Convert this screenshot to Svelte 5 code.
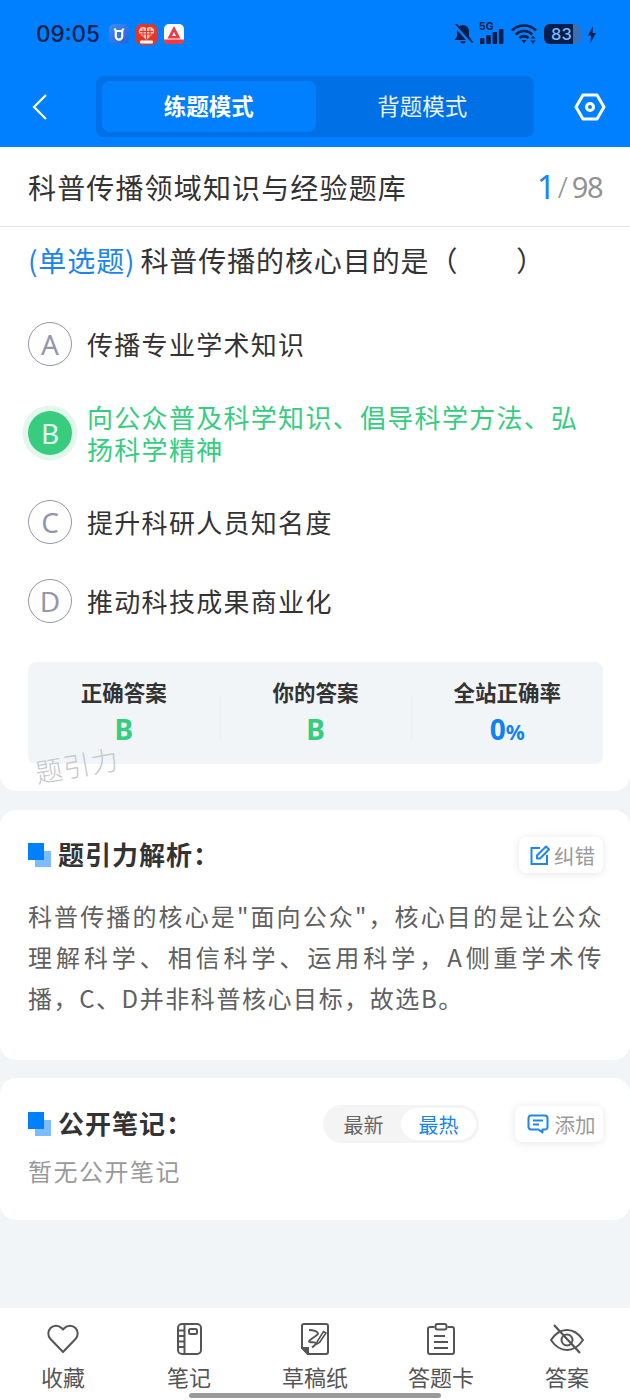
<script>
  const options = [
    { key: 'A', text: '传播专业学术知识' },
    { key: 'B', text: '向公众普及科学知识、倡导科学方法、弘扬科学精神', correct: true },
    { key: 'C', text: '提升科研人员知名度' },
    { key: 'D', text: '推动科技成果商业化' }
  ];
</script>

<div class="page">
  <header class="header">
    <div class="status">
      <span class="time">09:05</span>
      <div class="apps">
        <svg width="20" height="20" viewBox="0 0 20 20"><defs><linearGradient id="g1" x1="0" y1="0" x2="1" y2="1"><stop offset="0" stop-color="#3d8cf5"/><stop offset="1" stop-color="#2560dc"/></linearGradient></defs><rect width="20" height="20" rx="5" fill="url(#g1)"/><path d="M5.500 4.500 7 7M14.500 4.500 13 7M6.800 7h6.400v5.500a3.200 3.200 0 0 1-6.400 0z" fill="none" stroke="#fff" stroke-width="2.200"/></svg>
        <svg width="21" height="21" viewBox="0 0 21 21"><rect width="21" height="21" rx="5" fill="#e2362a"/><path d="M10.500 16 3.500 9.500A3.900 3.900 0 0 1 10.500 4.800a3.900 3.900 0 0 1 7 4.700z" fill="#f9c8b8"/><path d="M4 7.500h13M4 10h13M7 4.500v9M10.500 4.500v11M14 4.500v9" stroke="#e2362a" stroke-width="1"/><rect x="4" y="16.500" width="13" height="3" rx="1" fill="#fff"/></svg>
        <svg width="20" height="20" viewBox="0 0 20 20"><rect width="20" height="20" rx="5" fill="#fff"/><path d="M10 2 16.500 14.500H3.500zM10 8 8 12h4z" fill="#ee3a45" fill-rule="evenodd"/><path d="M0 15.500h20V15 15.500 16a4 4 0 0 1-4 4H4a4 4 0 0 1-4-4z" fill="#ee3a45"/></svg>
      </div>
      <div class="sys">
        <svg width="20" height="20" viewBox="0 0 20 20"><path d="M10 1a6 6 0 0 0-6 6v5.500L1.500 16h17L16 12.500V7a6 6 0 0 0-6-6zM7.500 17h5a2.500 2.500 0 0 1-5 0z" fill="#04204a"/><path d="M1 0l17 19" stroke="#0080ff" stroke-width="3.500"/><path d="M3 0l16.500 18.500" stroke="#04204a" stroke-width="1.800"/></svg>
        <div class="sig">
          <span class="fiveg">5G</span>
          <svg width="24" height="22" viewBox="0 0 24 22"><rect x="0" y="15" width="4.500" height="6" rx=".8"/><rect x="6.300" y="12" width="4.500" height="9" rx=".8"/><rect x="12.600" y="9" width="4.500" height="12" rx=".8"/><rect x="18.900" y="6" width="4.500" height="15" rx=".8"/></svg>
        </div>
        <svg width="26" height="20" viewBox="0 0 26 20" fill="none" stroke="#04204a" stroke-width="2.600"><path d="M1 6.500a17 17 0 0 1 24 0M4.800 10.500a11.500 11.500 0 0 1 16.400 0M8.500 14.200a6 6 0 0 1 9 0"/><path d="M10.500 16h5l-2.500 3.500z" fill="#04204a" stroke="none"/><path d="M22 11.500l2.500 3h-5zM22 20l2.500-3.500h-5z" fill="#04204a" stroke="none"/></svg>
        <div class="batt"><i></i><span>83</span></div>
        <svg width="8" height="17" viewBox="0 0 8 17"><path d="M5 0 0 9.500h3L2.500 17 8 7H4.500z" fill="#04204a"/></svg>
      </div>
    </div>
    <nav class="nav">
      <svg class="back" width="18" height="28" viewBox="0 0 18 28"><path d="M15 2 3 14l12 12" fill="none" stroke="#fff" stroke-width="2.200"/></svg>
      <div class="tabs">
        <span class="tab active">练题模式</span>
        <span class="tab">背题模式</span>
      </div>
      <svg class="gear" width="32" height="28" viewBox="0 0 32 28" fill="none" stroke="#fff" stroke-width="3"><path d="M9 2h14l7 12-7 12H9L2 14z" stroke-linejoin="round"/><circle cx="16" cy="14" r="3.500"/></svg>
    </nav>
  </header>

  <section class="card first">
    <div class="title-row">
      <h1>科普传播领域知识与经验题库</h1>
      <div class="count"><b>1</b><em>/</em><span>98</span></div>
    </div>
    <div class="body">
      <p class="q"><span class="kind">(单选题)</span><span class="qt">科普传播的核心目的是（&emsp;&emsp;）</span></p>
      <ul class="opts">
        {#each options as o}
          <li class:correct={o.correct}>
            <span class="letter">{o.key}</span>
            <span class="txt">{o.text}</span>
          </li>
        {/each}
      </ul>
      <div class="stats">
        <div class="stat"><h3>正确答案</h3><strong class="green">B</strong></div>
        <div class="stat"><h3>你的答案</h3><strong class="green">B</strong></div>
        <div class="stat"><h3>全站正确率</h3><strong class="blue">0<small>%</small></strong></div>
        <span class="mark">题引力</span>
      </div>
    </div>
  </section>

  <section class="card analysis">
    <div class="sec-head">
      <div class="sq"><i></i><u></u></div>
      <h2>题引力解析：</h2>
      <button class="chip">
        <svg width="21" height="21" viewBox="0 0 21 21" fill="none" stroke="#1f86ef" stroke-width="2"><path d="M11 3H2.500v16h15.500v-9"/><path d="M17 1.500 20 4.500 11 13.500H8v-3z" stroke-linejoin="round"/></svg>
        <span>纠错</span>
      </button>
    </div>
    <p class="exp">科普传播的核心是"面向公众"，核心目的是让公众理解科学、相信科学、运用科学，A侧重学术传播，C、D并非科普核心目标，故选B。</p>
  </section>

  <section class="card notes">
    <div class="sec-head">
      <div class="sq"><i></i><u></u></div>
      <h2>公开笔记：</h2>
      <div class="seg"><span>最新</span><span class="on">最热</span></div>
      <button class="chip add">
        <svg width="22" height="20" viewBox="0 0 22 20" fill="none" stroke="#1f86ef" stroke-width="2"><path d="M4 1.500h14a2.500 2.500 0 0 1 2.500 2.500v9a2.500 2.500 0 0 1-2.500 2.500h-2.500v3l-4-3H4A2.500 2.500 0 0 1 1.500 13V4A2.500 2.500 0 0 1 4 1.500z" stroke-linejoin="round"/><path d="M6 6.500h10M6 10.500h6"/></svg>
        <span>添加</span>
      </button>
    </div>
    <p class="none">暂无公开笔记</p>
  </section>

  <div class="spacer"></div>

  <footer class="tabbar">
    <div class="item">
      <svg width="32" height="30" viewBox="0 0 32 30" fill="none" stroke="#555" stroke-width="2"><path d="M16 28 3.500 15A8 8 0 0 1 3.500 4a7.800 7.800 0 0 1 11 0L16 5.500 17.500 4a7.800 7.800 0 0 1 11 0 8 8 0 0 1 0 11z" stroke-linejoin="round"/></svg>
      <span>收藏</span>
    </div>
    <div class="item">
      <svg width="26" height="32" viewBox="0 0 26 32" fill="none" stroke="#555" stroke-width="2"><rect x="2" y="1" width="23" height="30" rx="4"/><path d="M8.500 1v30M1 7.500h7.500M1 13h7.500M1 18.500h7.500M1 24h7.500"/><rect x="13" y="6" width="8" height="5" rx="1.500"/></svg>
      <span>笔记</span>
    </div>
    <div class="item">
      <svg width="28" height="32" viewBox="0 0 28 32" fill="none" stroke="#555" stroke-width="2"><path d="M7 31h18a2 2 0 0 0 2-2V3a2 2 0 0 0-2-2H3a2 2 0 0 0-2 2v22z" stroke-linejoin="round"/><path d="M1.500 25H7v6z" fill="#555"/><path d="M8 7c5 0 9 2 9 3.500 0 2-9 6-9 8 0 1.500 7 0 7 1.500s-2 3-4 4.500"/><path d="M18.500 19.500 25 10l-2.500-1.500L16.500 18l-.5 3z" stroke-width="1.600"/></svg>
      <span>草稿纸</span>
    </div>
    <div class="item">
      <svg width="28" height="32" viewBox="0 0 28 32" fill="none" stroke="#555" stroke-width="2"><path d="M7.500 4H3a2 2 0 0 0-2 2v23a2 2 0 0 0 2 2h22a2 2 0 0 0 2-2V6a2 2 0 0 0-2-2h-4.500"/><rect x="8.500" y="1" width="11" height="5.500" rx="2"/><path d="M7 13h11M7 19h14M7 25h14"/></svg>
      <span>答题卡</span>
    </div>
    <div class="item">
      <svg width="36" height="30" viewBox="0 0 36 30" fill="none" stroke="#555" stroke-width="2"><path d="M2 16c4-6 10-10 16-10s12 4 16 10c-4 6-10 10-16 10S6 22 2 16z" stroke-linejoin="round"/><circle cx="18" cy="16" r="5.500"/><path d="M5 1l26 28" stroke-width="2.200"/></svg>
      <span>答案</span>
    </div>
    <i class="home"></i>
  </footer>
</div>

<style>
  :global(body) { margin: 0; background: #f2f5f8; }
  * { box-sizing: border-box; }
  .page {
    width: 630px; height: 1400px; display: flex; flex-direction: column;
    background: #f2f5f8; overflow: hidden;
    font-family: "Noto Sans CJK SC", "Noto Sans", sans-serif;
  }
  .header { height: 147px; background: #0080ff; flex: none; padding-top: 19px; }
  .status { height: 30px; display: flex; align-items: center; padding: 0 34px 0 36px; color: #04204a; }
  .time { font: 500 22.500px/30px "Inter", "Noto Sans", sans-serif; width: 73px; }
  .apps { display: flex; align-items: center; gap: 7px; }
  .sys { margin-left: auto; display: flex; align-items: center; gap: 7px; }
  .sig { position: relative; width: 24px; height: 22px; fill: #04204a; }
  .sig svg { display: block; }
  .fiveg { position: absolute; left: -1px; top: -1px; font: 700 10.500px/10px "Inter", sans-serif; color: #04204a; }
  .batt { position: relative; width: 37px; height: 20px; border-radius: 6px; background: #3570b8; overflow: hidden; }
  .batt i { position: absolute; left: 0; top: 0; bottom: 0; width: 29px; background: #04204a; }
  .batt span { position: absolute; left: 7px; top: 0; font: 500 16.500px/20px "Inter", sans-serif; color: #7fb9ff; }
  .nav { margin-top: 27px; height: 61px; display: flex; align-items: center; padding: 0 24px 0 31px; }
  .back { flex: none; }
  .tabs { width: 438px; height: 61px; margin-left: 47px; background: #0070e6; border-radius: 8px; padding: 5px 5px 5px 6px; display: flex; }
  .tab { flex: 1; display: flex; align-items: center; justify-content: center; padding-bottom: 3px; color: #e8f3ff; font-size: 22.500px; border-radius: 8px; }
  .tab.active { background: #0080ff; color: #fff; font-weight: 700; }
  .gear { margin-left: auto; flex: none; }

  .card { background: #fff; border-radius: 16px; flex: none; }
  .first { height: 644px; border-radius: 0 0 16px 16px; }
  .title-row { height: 80px; padding: 0 27px 0 28px; display: flex; align-items: center; justify-content: space-between; border-bottom: 1px solid #e4e6ea; }
  h1 { margin: 0; font-size: 28px; font-weight: 400; letter-spacing: 1.150px; color: #333; }
  .count { display: flex; align-items: baseline; color: #929292; font-size: 29px; line-height: 40px; font-family: "Noto Sans", sans-serif; }
  .count b { color: #1a84ef; font-weight: 400; font-size: 33px; margin-right: 2px; position: relative; top: 1px; }
  .count em { font-style: normal; font-weight: 300; margin-right: 4px; }
  .count span { letter-spacing: -1.500px; margin-right: 1px; }
  .body { padding: 0 27px 0 28px; }
  .q { margin: 13px 0 0; font-size: 28px; line-height: 40px; color: #333; letter-spacing: .9px; white-space: nowrap; display: flex; }
  .kind { color: #1a84ef; }
  .qt { margin-left: 5px; }
  .opts { list-style: none; margin: 42px 0 0; padding: 0; }
  .opts li { display: flex; align-items: center; gap: 15px; min-height: 44px; margin-bottom: 35px; }
  .letter {
    flex: none; width: 44px; height: 44px; border-radius: 50%; border: 1.500px solid #9497ab;
    display: flex; align-items: center; justify-content: center; font: 400 28px/1 "Noto Sans", sans-serif; color: #9497ab;
  }
  .txt { font-size: 26px; line-height: 32px; color: #333; letter-spacing: 1.300px; }
  .correct .txt { color: #35cd80; }
  .correct .letter { background: #38cc7e; border: none; color: #e8fff3; box-shadow: 0 0 0 5.500px #e3f7ec; }
  .stats { position: relative; margin-top: 39px; height: 102px; background: #f2f5f8; border-radius: 8px; display: grid; grid-template-columns: repeat(3, 1fr); padding-top: 15px; }
  .stat { text-align: center; position: relative; }
  .stat + .stat::before { content: ""; position: absolute; left: 0; top: 20px; height: 44px; width: 1px; background: #ebeef2; }
  .stat h3 { margin: -1px 0 0; font-size: 21.500px; line-height: 32px; font-weight: 700; color: #333; }
  .stat strong { display: block; font: 700 28px/40px "Noto Sans", sans-serif; margin-top: 1px; }
  .stat small { font-size: 21px; }
  .green { color: #35cd80; }
  .blue { color: #0f82f5; }
  .mark { position: absolute; left: 7px; top: 86px; font-size: 27px; line-height: 34px; font-weight: 300; letter-spacing: 1px; color: #c4c8cc; transform: rotate(-10deg); }

  .analysis { margin-top: 19px; height: 250px; padding: 0 27px 0 28px; }
  .notes { margin-top: 18px; height: 142px; padding: 0 27px 0 28px; }
  .sec-head { display: flex; align-items: center; }
  .analysis .sec-head { height: 90px; }
  .notes .sec-head { height: 92px; }
  .sq { position: relative; width: 23px; height: 24px; margin-right: 7px; flex: none; }
  .sq i { position: absolute; left: 0; top: 0; width: 16px; height: 17px; background: #0080ff; z-index: 1; }
  .sq u { position: absolute; left: 7px; top: 8px; width: 16px; height: 16px; background: #7dbdff; }
  h2 { margin: 0 0 4px; font-size: 26px; font-weight: 700; color: #333; letter-spacing: 1px; }
  .chip {
    margin-left: auto; height: 36px; width: 84px; border: none; background: #fff; border-radius: 7px;
    box-shadow: 0 1px 8px rgba(0,0,0,.1); display: flex; align-items: center; justify-content: center; gap: 4px;
    font: 400 20.500px/36px "Noto Sans CJK SC", sans-serif; color: #9a9a9a; padding: 0 0 0 2px;
  }
  .chip.add { width: 88px; margin-left: 36px; gap: 6px; padding-left: 4px; }
  .exp { margin: -5px 0 0; font-size: 24px; line-height: 41px; letter-spacing: 1.570px; color: #606060; text-align: justify; }
  .seg { margin-left: auto; width: 156px; height: 38px; background: #f4f4f4; border-radius: 19px; display: flex; padding: 3px; font-size: 20px; color: #666; }
  .seg span { flex: 1; display: flex; align-items: center; justify-content: center; border-radius: 16px; }
  .seg .on { background: #fff; color: #1a84ef; flex: 0 0 75px; }
  .none { margin: -17px 0 0; font-size: 24px; line-height: 36px; letter-spacing: 1.500px; color: #9a9a9a; }

  .spacer { flex: 1; }
  .tabbar { position: relative; height: 92px; flex: none; background: #fff; display: grid; grid-template-columns: repeat(5, 1fr); }
  .item { display: flex; flex-direction: column; align-items: center; padding-top: 15px; gap: 8px; color: #555; }
  .item svg { height: 32px; flex: none; }
  .item span { font-size: 22px; line-height: 26px; }
  .home { position: absolute; left: 189px; bottom: 2px; width: 252px; height: 5px; border-radius: 3px; background: #9a9a9a; }
</style>
